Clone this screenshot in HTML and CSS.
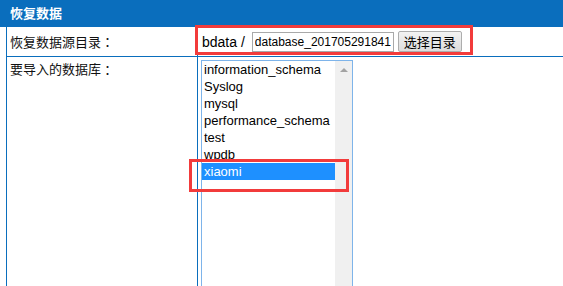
FILE: index.html
```html
<!DOCTYPE html>
<html lang="zh-CN">
<head>
    <meta charset="UTF-8">
    <meta name="viewport" content="width=device-width, initial-scale=1.0">
    <title>恢复数据</title>
    <link rel="stylesheet" href="styles.css">
</head>
<body>

    <div class="panel">
        <div class="panel-title">恢复数据</div>

        <div class="form">
            <!-- 数据源目录 -->
            <div class="row">
                <div class="label">恢复数据源目录<span class="colon">：</span></div>
                <div class="field field-dir">
                    <span class="dir-prefix">bdata /</span>
                    <input class="dir-input" type="text" value="database_20170529184125">
                    <button class="btn">选择目录</button>
                </div>
            </div>

            <!-- 数据库列表 -->
            <div class="row row-tall">
                <div class="label label-top">要导入的数据库<span class="colon">：</span></div>
                <div class="field">
                    <div class="listbox">
                        <div class="options">
                            <div class="option">information_schema</div>
                            <div class="option">Syslog</div>
                            <div class="option">mysql</div>
                            <div class="option">performance_schema</div>
                            <div class="option">test</div>
                            <div class="option">wpdb</div>
                            <div class="option selected">xiaomi</div>
                        </div>
                        <div class="scrollbar"><span class="arrow-up"></span></div>
                    </div>
                </div>
            </div>
        </div>

        <!-- 标注框 -->
        <div class="mark mark-dir"></div>
        <div class="mark mark-db"></div>
    </div>

</body>
</html>
```

FILE: styles.css
```css
body {
    margin: 0;
    padding: 0;
    background-color: #fff;
    font-family: "Liberation Sans", "Noto Sans CJK SC", sans-serif;
    font-size: 13px;
    color: #000;
    overflow: hidden;
}

.panel {
    position: relative;
    height: 286px;
}

.panel-title {
    height: 27px;
    line-height: 27px;
    padding-left: 10px;
    background-color: #0a6ebd;
    color: #fff;
    font-weight: bold;
}

.form {
    margin-left: 6px;
    border-left: 1px solid #0a6ebd;
}

.row {
    display: grid;
    grid-template-columns: 191px 1fr;
    height: 30px;
    border-bottom: 1px solid #0a6ebd;
    box-sizing: border-box;
}

.row-tall {
    height: 240px;
    border-bottom: none;
}

.label {
    display: flex;
    align-items: center;
    padding-left: 3px;
    border-right: 1px solid #0a6ebd;
    color: #111;
}

.label-top {
    align-items: flex-start;
    padding-top: 4px;
    line-height: 18px;
}

.colon {
    font-family: "Noto Sans CJK JP", sans-serif;
}

.field-dir {
    display: flex;
    align-items: center;
    padding-left: 4px;
}

.dir-prefix {
    font-size: 14px;
    margin-right: 7px;
}

.dir-input {
    width: 142px;
    height: 20px;
    box-sizing: border-box;
    border: 1px solid #a9a9a9;
    padding: 0 2px;
    margin: 1px 0 0 0;
    font-family: "Liberation Sans", sans-serif;
    font-size: 12px;
    outline: none;
}

.btn {
    width: 64px;
    height: 21px;
    margin-left: 4px;
    padding: 0;
    border: 1px solid #adadad;
    border-radius: 2px;
    background: linear-gradient(#f3f3f3, #dcdcdc);
    font-family: "Noto Sans CJK SC", sans-serif;
    font-size: 13px;
    color: #000;
}

.listbox {
    display: flex;
    width: 152px;
    height: 240px;
    margin: 3px 0 0 3px;
    box-sizing: border-box;
    border: 1px solid #7eb4ea;
}

.options {
    flex: 1;
}

.option {
    height: 17px;
    line-height: 17px;
    padding-left: 2px;
    white-space: nowrap;
}

.option.selected {
    background-color: #1e90ff;
    color: #fff;
}

.scrollbar {
    width: 17px;
    background-color: #f0f0f0;
    display: flex;
    justify-content: center;
    padding-top: 7px;
    box-sizing: border-box;
}

.arrow-up {
    width: 0;
    height: 0;
    border-left: 4px solid transparent;
    border-right: 4px solid transparent;
    border-bottom: 4px solid #a3a3a3;
}

.mark {
    position: absolute;
    border: 3px solid #f23b3b;
    box-sizing: border-box;
}

.mark-dir {
    left: 195px;
    top: 25px;
    width: 278px;
    height: 30px;
}

.mark-db {
    left: 189px;
    top: 159px;
    width: 160px;
    height: 33px;
}
```
